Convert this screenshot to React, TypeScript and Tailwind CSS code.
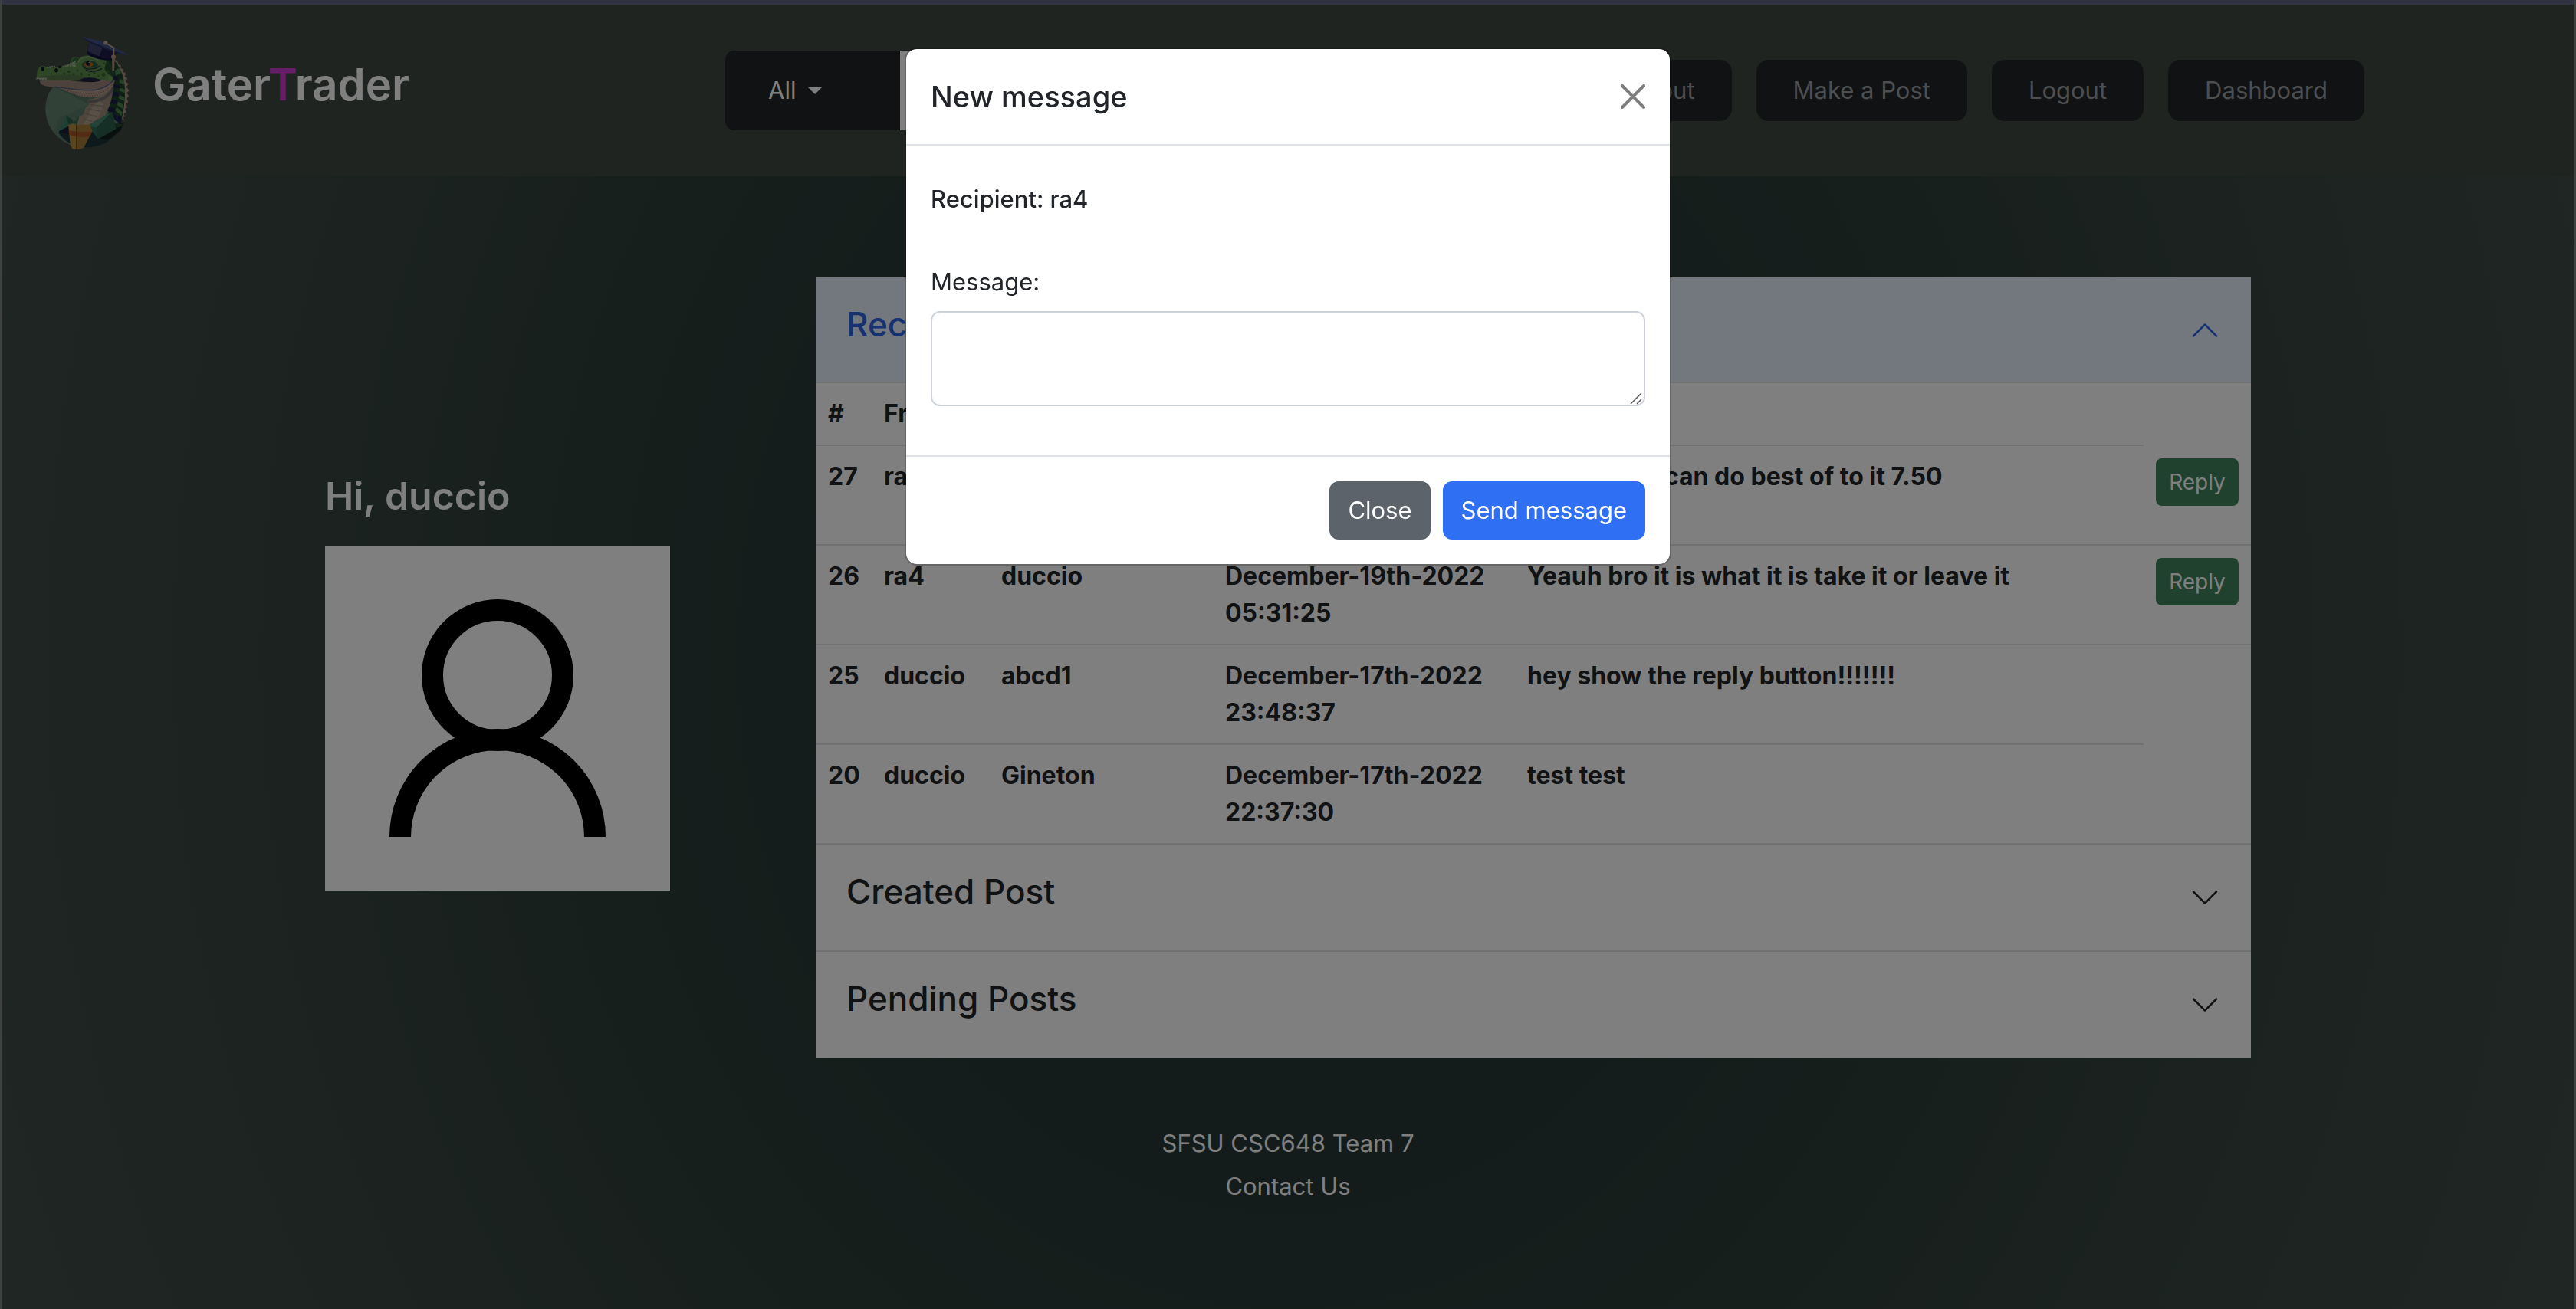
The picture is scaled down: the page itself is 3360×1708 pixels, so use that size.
import React from "react";

type Message = {
  id: number;
  from: string;
  to: string;
  date: string;
  text: string;
  canReply: boolean;
};

const messages: Message[] = [
  { id: 27, from: "ra4", to: "duccio", date: "December-19th-2022 05:32:10", text: "Sorry, bro I can do best of to it 7.50", canReply: true },
  { id: 26, from: "ra4", to: "duccio", date: "December-19th-2022 05:31:25", text: "Yeauh bro it is what it is take it or leave it", canReply: true },
  { id: 25, from: "duccio", to: "abcd1", date: "December-17th-2022 23:48:37", text: "hey show the reply button!!!!!!!", canReply: false },
  { id: 20, from: "duccio", to: "Gineton", date: "December-17th-2022 22:37:30", text: "test test", canReply: false },
];

function GatorLogo() {
  return (
    <svg viewBox="50 30 376 450" className="mt-1.5 h-[150px] w-[125px] shrink-0" aria-hidden="true">
      {/* backdrop disc */}
      <path d="M120 234C92 262 86 312 94 350C106 410 160 468 240 470C318 470 372 430 390 376L360 250L250 230Z" fill="#5a7a6c" />
      <path d="M120 234C92 262 86 312 94 350C98 372 108 392 122 408L146 352L200 330L262 300L250 284Z" fill="#62826f" />
      <path d="M132 234L262 300L254 262L170 240Z" fill="#52725f" />
      {/* spikes along the back */}
      <path d="M358 122L374 134L376 144L386 148L386 160L396 162L394 174L405 178L401 192L412 198L405 212L416 220L407 232L419 246L409 256L417 268L409 278L415 292L406 298L411 312L402 318L407 332L397 338L402 350L394 350L399 364L384 352L372 200Z" fill="#a8917e" />
      {/* back and banding */}
      <path d="M330 116L358 126C390 160 404 210 402 262C400 310 392 350 386 376L336 340L352 210Z" fill="#1d3f2c" />
      <g fill="#4f8250">
        <path d="M362 168L378 158L388 176L366 188Z" />
        <path d="M380 202L398 204L401 222L380 216Z" />
        <path d="M382 236L403 242L402 256L380 248Z" />
        <path d="M380 264L401 274L399 288L376 276Z" />
        <path d="M376 290L397 304L393 318L370 302Z" />
        <path d="M370 312L392 332L388 346L362 322Z" />
      </g>
      <g fill="#1b2145">
        <path d="M352 186L372 190L380 210L360 204Z" />
        <path d="M354 220L380 226L382 238L352 236Z" />
        <path d="M352 250L380 256L376 270L348 266Z" />
        <path d="M346 280L374 286L368 300L340 296Z" />
        <path d="M336 310L366 316L360 334L330 326Z" />
        <path d="M356 336L388 354L388 380L362 362Z" />
      </g>
      {/* throat and neck */}
      <path d="M358 210C356 250 350 290 336 318L326 344L240 392L214 378L222 350L240 340L246 316L262 300L254 284L300 272Z" fill="#9c8a79" />
      <path d="M300 284L268 318L256 350L236 384L262 382L300 350L318 300Z" fill="#b09f8c" />
      <path d="M248 336L292 350M256 318L306 328M268 302L318 308M240 358L276 368" stroke="#857567" strokeWidth="3" fill="none" />
      <path d="M254 284C300 290 340 262 358 222L358 246C344 272 310 296 262 296Z" fill="#5c5560" opacity=".6" />
      {/* dark coat */}
      <path d="M146 400L182 396L262 384L340 384L388 382C384 398 374 412 362 424C330 460 280 472 236 470C196 466 164 444 142 414Z" fill="#1c3337" />
      <path d="M316 376L396 376L384 404L336 440L300 436L380 390Z" fill="#0f2119" />
      <path d="M142 406L184 384L190 420L150 410Z" fill="#1a2138" />
      <path d="M316 376L350 372L398 380L380 390L340 390Z" fill="#24462e" />
      {/* collar */}
      <path d="M170 344L142 406L200 374Z" fill="#3f7f66" />
      <path d="M170 344L196 360L200 374L182 386Z" fill="#2c604d" />
      <path d="M200 374L222 348L214 380Z" fill="#37664e" />
      <path d="M352 330L256 384L296 436L366 396Z" fill="#2f6b58" />
      <path d="M352 330L256 384L290 392Z" fill="#448770" />
      <path d="M290 392L296 436L366 396L352 330Z" fill="#2b5f4f" />
      {/* cup */}
      <path d="M180 380L200 376L212 382L262 380L274 404L240 470Q226 480 198 476Q188 470 186 446Z" fill="#b28a3e" />
      <path d="M212 382L262 380L274 404L240 470Q226 480 212 476Z" fill="#a37b36" />
      <path d="M180 402L212 408L272 408L262 430L212 428L184 422Z" fill="#a8592c" />
      <path d="M211 380V476" stroke="#70491f" strokeWidth="3" />
      {/* lower jaw */}
      <path d="M68 208L90 204L180 206L240 214L340 204L362 206C358 236 332 262 300 270C262 280 210 264 170 244L132 232C92 230 68 228 68 208Z" fill="#9b8478" />
      <path d="M136 233C190 244 230 248 280 244C312 240 340 222 356 210C356 240 324 268 284 273C232 276 184 256 136 233Z" fill="#b49a8b" />
      <path d="M150 236C200 258 250 262 300 256C325 250 345 232 354 220" stroke="#8a6e66" strokeWidth="4" strokeDasharray="5 5" fill="none" />
      <path d="M166 244C215 268 262 272 312 262" stroke="#8a6e66" strokeWidth="4" strokeDasharray="4 6" fill="none" />
      <path d="M128 232C190 240 240 250 286 244C320 238 344 220 358 206" stroke="#4c5a80" strokeWidth="4" fill="none" />
      {/* upper head */}
      <path d="M56 198C54 168 62 150 78 150C100 152 110 162 138 154C166 148 186 142 190 134C188 116 208 110 222 120C234 108 268 104 290 116C316 118 340 130 348 150C362 176 360 204 348 210C320 208 296 198 266 196C246 198 238 204 214 206C180 208 120 206 84 206Z" fill="#5c8a4c" />
      <path d="M60 196C70 186 110 190 150 186C190 180 226 186 250 196C236 204 220 206 200 206L80 206Z" fill="#55744a" />
      <path d="M330 126C352 140 364 178 356 200C350 184 330 182 322 160Z" fill="#244a2c" />
      <path d="M192 134C196 116 212 114 222 122L212 140Z" fill="#32653b" />
      <path d="M218 134C236 108 280 108 298 130" stroke="#8fae7c" strokeWidth="7" strokeDasharray="4 3" fill="none" />
      <path d="M232 146C240 124 284 122 298 148C280 160 246 162 232 146Z" fill="#2f5936" />
      <path d="M240 146C246 130 272 130 278 144C272 156 250 158 240 146Z" fill="#b3641f" />
      <circle cx="258" cy="140" r="9" fill="#0d1018" />
      <circle cx="261" cy="136" r="2" fill="#d6dad8" />
      <path d="M236 152C250 168 282 164 306 150M248 166C268 176 290 172 312 160" stroke="#23303c" strokeWidth="4" fill="none" />
      <path d="M222 206C244 192 276 192 310 206C290 216 250 216 222 206Z" fill="#1c2040" />
      <g fill="#0f1a1a">
        <ellipse cx="79" cy="161" rx="6" ry="9" />
        <ellipse cx="133" cy="167" rx="7" ry="8" />
        <ellipse cx="147" cy="154" rx="7" ry="5" />
      </g>
      <path d="M96 156L128 152M158 154L214 140M176 148L212 150M186 142L208 134" stroke="#a4b29a" strokeWidth="6" strokeDasharray="6 3" fill="none" />
      <g fill="#38642f">
        <circle cx="164" cy="180" r="4" />
        <circle cx="182" cy="172" r="5" />
        <circle cx="200" cy="182" r="4" />
        <circle cx="216" cy="168" r="4" />
        <circle cx="232" cy="182" r="5" />
        <circle cx="262" cy="184" r="4" />
        <circle cx="282" cy="178" r="5" />
        <circle cx="298" cy="190" r="4" />
        <circle cx="318" cy="184" r="7" />
        <circle cx="336" cy="172" r="5" />
        <circle cx="320" cy="140" r="4" />
        <circle cx="112" cy="180" r="3" />
      </g>
      <circle cx="345" cy="198" r="9" fill="#6f9a5b" />
      {/* teeth */}
      <path d="M54 196H96L92 206L86 200L80 208L74 201L68 206L64 200L54 203Z" fill="#a9b0a0" />
      {/* graduation cap */}
      <path d="M262 54L252 96C280 118 320 126 358 122L372 92L370 84Z" fill="#231f4a" />
      <path d="M254 94C286 114 322 124 358 120V128C310 128 272 120 254 102Z" fill="#0f1736" />
      <path d="M262 54L256 92L302 112L316 70Z" fill="#43436a" />
      <path d="M316 70L302 112L352 118L356 82Z" fill="#211a4e" />
      <path d="M228 34L330 58L424 112L366 98L268 62Z" fill="#445284" />
      <path d="M228 34L268 62L366 98L424 112L362 92L272 56Z" fill="#252f5a" />
      <path d="M326 60L358 78V110" stroke="#bfa98c" strokeWidth="5" fill="none" />
      <circle cx="326" cy="59" r="8" fill="#bfa98c" />
      <circle cx="357" cy="114" r="9" fill="#b3977d" />
      <path d="M351 120H362L360 168H352Z" fill="#a8917a" />
    </svg>
  );
}

function Chevron({ open = false }: { open?: boolean }) {
  return (
    <svg
      viewBox="0 0 16 16"
      fill="currentColor"
      className={open ? "size-10 shrink-0 rotate-180" : "size-10 shrink-0"}
      aria-hidden="true"
    >
      <path d="M1.646 4.646a.5.5 0 0 1 .708 0L8 10.293l5.646-5.647a.5.5 0 0 1 .708.708l-6 6a.5.5 0 0 1-.708 0l-6-6a.5.5 0 0 1 0-.708z" />
    </svg>
  );
}

function NavLink({ children }: { children: React.ReactNode }) {
  return (
    <a href="#" className="flex h-20 items-center whitespace-nowrap rounded-2xl bg-[#212529] px-12 text-[#9b9c9e]">
      {children}
    </a>
  );
}

function Navbar() {
  return (
    <header className="flex h-56 items-center bg-[#414842] pl-11 pr-[274px]">
      <a href="#" className="flex w-[900px] shrink-0 items-center gap-7">
        <GatorLogo />
        <span className="mb-4 text-[58px] leading-[76px] font-semibold text-white">
          Gater<span className="text-[#cc3ccc]">T</span>rader
        </span>
      </a>
      <form className="flex h-[104px] min-w-0 flex-1">
        <button type="button" aria-haspopup="listbox" className="flex w-[228px] items-center gap-4 rounded-l-xl bg-[#212529] pl-14 text-white">
          All
          <svg viewBox="0 0 18 9" className="h-[9px] w-[18px]" fill="currentColor" aria-hidden="true">
            <path d="M0 0H18L9 9Z" />
          </svg>
        </button>
        <input aria-label="Search" className="min-w-0 flex-1 bg-white px-6" />
        <button type="button" className="rounded-r-xl bg-[#212529] px-8 text-white">
          Search
        </button>
      </form>
      <nav className="ml-8 flex gap-8">
        <NavLink>About</NavLink>
        <NavLink>Make a Post</NavLink>
        <NavLink>Logout</NavLink>
        <NavLink>Dashboard</NavLink>
      </nav>
    </header>
  );
}

function Profile() {
  return (
    <section className="w-[450px] shrink-0 pt-[252px]">
      <h3 className="mb-8 text-[50px] leading-[66px] font-semibold text-white">Hi, duccio</h3>
      <svg viewBox="0 0 450 450" className="w-full bg-white" role="img" aria-label="Profile picture">
        <g fill="none" stroke="#000" strokeWidth="28">
          <circle cx="225" cy="169" r="85" />
          <path d="M98 380A127 127 0 0 1 352 380" />
        </g>
      </svg>
    </section>
  );
}

function SectionHeader({ title, open = false }: { title: string; open?: boolean }) {
  return (
    <button
      type="button"
      aria-expanded={open}
      className={
        open
          ? "flex h-[138px] w-full items-center justify-between bg-[#e7f1ff] px-10 text-[#2c64e0] shadow-[inset_0_-2px_0_#dee2e6]"
          : "flex h-[138px] w-full items-center justify-between px-10 text-[#212529]"
      }
    >
      <span className="mb-4 text-[44px] leading-[58px] font-medium">{title}</span>
      <Chevron open={open} />
    </button>
  );
}

const cell = "border-b-2 border-[#dee2e6] p-4 group-last:border-b-0";

function MessagesTable() {
  return (
    <table className="w-full table-fixed border-separate border-spacing-0 text-left align-top text-[32px] font-bold">
      <colgroup>
        <col className="w-[73px]" />
        <col className="w-[153px]" />
        <col className="w-[292px]" />
        <col className="w-[394px]" />
        <col />
        <col className="w-[140px]" />
      </colgroup>
      <thead>
        <tr>
          <th className={cell}>#</th>
          <th className={cell}>From</th>
          <th className={cell}>To</th>
          <th className={cell}>Date</th>
          <th className={cell}>Message</th>
        </tr>
      </thead>
      <tbody className="align-top">
        {messages.map((m) => (
          <tr key={m.id} className="group">
            <td className={cell}>{m.id}</td>
            <td className={cell}>{m.from}</td>
            <td className={cell}>{m.to}</td>
            <td className={cell}>{m.date}</td>
            <td className={cell}>{m.text}</td>
            {m.canReply && (
              <td className={cell}>
                <button type="button" className="block h-[62px] w-full rounded-lg bg-[#40825a] text-[28px] font-normal text-white">
                  Reply
                </button>
              </td>
            )}
          </tr>
        ))}
      </tbody>
    </table>
  );
}

function MessageModal() {
  return (
    <div className="fixed inset-0 flex items-start justify-center bg-black/50 pt-[62px]">
      <div
        role="dialog"
        aria-modal="true"
        aria-labelledby="dialog-title"
        className="w-full max-w-[1000px] rounded-2xl border-2 border-black/20 bg-white bg-clip-padding text-[#212529]"
      >
        <div className="flex items-center justify-between border-b-2 border-[#dee2e6] p-8">
          <h5 id="dialog-title" className="text-[38px] leading-[60px] font-medium">New message</h5>
          <button type="button" aria-label="Close dialog" className="opacity-50">
            <svg viewBox="0 0 16 16" className="size-8" fill="#000" aria-hidden="true">
              <path d="M.293.293a1 1 0 0 1 1.414 0L8 6.586 14.293.293a1 1 0 1 1 1.414 1.414L9.414 8l6.293 6.293a1 1 0 0 1-1.414 1.414L8 9.414l-6.293 6.293a1 1 0 0 1-1.414-1.414L6.586 8 .293 1.707a1 1 0 0 1 0-1.414z" />
            </svg>
          </button>
        </div>
        <div className="p-8">
          <p className="mb-8 py-3.5 font-medium">Recipient: ra4</p>
          <label htmlFor="message-text" className="block py-3.5">Message:</label>
          <div className="relative mb-8">
            <textarea
              id="message-text"
              className="block h-[124px] w-full resize-none rounded-xl border-2 border-[#ced4da] bg-white px-6 py-3 outline-none"
            />
            <svg viewBox="0 0 16 16" className="absolute right-1 bottom-0.5 size-4" stroke="#555" strokeWidth="1.5" aria-hidden="true">
              <path d="M1 15L15 1M9 15L15 9" />
            </svg>
          </div>
        </div>
        <div className="flex justify-end gap-4 border-t-2 border-[#dee2e6] p-8 text-white">
          <button type="button" className="h-[76px] rounded-xl bg-[#5c636a] px-6">Close</button>
          <button type="button" className="h-[76px] rounded-xl bg-[#2f6ff3] px-6">Send message</button>
        </div>
      </div>
    </div>
  );
}

export default function App() {
  return (
    <div className="min-h-screen border-x-2 border-[#7c827e] bg-[radial-gradient(ellipse_60%_140%_at_50%_50%,#243531_0%,#273935_30%,#35443f_60%,#3f4d47_90%)] font-['Inter','Liberation_Sans',sans-serif] text-[31px] leading-[48px] text-[#212529]">
      <div className="h-1.5 bg-[#626684]" />
      <Navbar />
      <main className="mx-auto mt-[132px] flex w-full max-w-[2512px] items-start gap-[190px]">
        <Profile />
        <section className="min-w-0 flex-1 bg-white">
          <SectionHeader title="Received Messages" open />
          <MessagesTable />
          <div className="border-t-2 border-[#dee2e6]">
            <SectionHeader title="Created Post" />
          </div>
          <div className="border-t-2 border-[#dee2e6]">
            <SectionHeader title="Pending Posts" />
          </div>
        </section>
      </main>
      <footer className="flex flex-col items-center gap-2 pt-[88px] text-white">
        <p>SFSU CSC648 Team 7</p>
        <a href="#">Contact Us</a>
      </footer>
      <MessageModal />
    </div>
  );
}
